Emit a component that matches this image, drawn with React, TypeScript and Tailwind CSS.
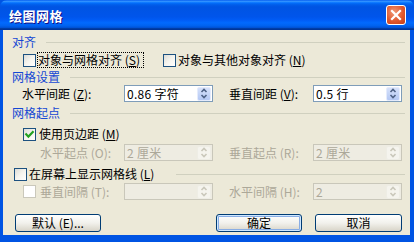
import React from "react";

function Box({ checked, disabled }: { checked?: boolean; disabled?: boolean }) {
  return (
    <div
      className={`w-[13px] h-[13px] shrink-0 border flex items-center justify-center ${
        disabled
          ? "border-[#CAC8BB] bg-white"
          : "border-[#1C5180] bg-gradient-to-br from-[#DCDCD7] via-[#F5F4EE] to-white"
      }`}
    >
      {checked && (
        <svg width="11" height="11" viewBox="0 0 11 11">
          <path d="M2.2 5.2 L4.4 7.6 L8.8 3" stroke="#21A121" strokeWidth="2.1" fill="none" strokeLinecap="square" />
        </svg>
      )}
    </div>
  );
}

function Spin({ disabled }: { disabled?: boolean }) {
  const c = disabled ? "#CAC8BB" : "#4D6185";
  return (
    <div
      className={`w-[14px] h-[14px] mr-[1px] rounded-[2px] border flex items-center justify-center ${
        disabled
          ? "border-[#EEEDE5] bg-[#F5F4EE]"
          : "border-[#E4EBFC] bg-gradient-to-b from-[#D6E1FA] to-[#B4C8F4]"
      }`}
    >
      <svg width="8" height="11" viewBox="0 0 8 11">
        <path d="M1.5 4 L4 1.5 L6.5 4" stroke={c} strokeWidth="1.6" fill="none" />
        <path d="M1.5 7 L4 9.5 L6.5 7" stroke={c} strokeWidth="1.6" fill="none" />
      </svg>
    </div>
  );
}

function Field({ value, disabled, w = "w-[89px]" }: { value: string; disabled?: boolean; w?: string }) {
  return (
    <div
      className={`${w} h-[17px] shrink-0 border flex items-center justify-between ${
        disabled ? "border-[#C9C7BA] bg-[#EEECE2] text-[#ACA899]" : "border-[#7F9DB9] bg-white text-black"
      }`}
    >
      <span className="pl-[2px] text-[12px] leading-none tracking-[0.3px]">{value}</span>
      <Spin disabled={disabled} />
    </div>
  );
}

function Header({ text }: { text: string }) {
  return (
    <div className="h-[16px] flex items-center pl-[9px] pr-[5px]">
      <span className="text-[12px] leading-none text-[#1548D4]">{text}</span>
      <div className="flex-1 ml-[10px] h-px bg-[#D0D0BF]" />
    </div>
  );
}

function Btn({ text, def, w }: { text: string; def?: boolean; w: string }) {
  return (
    <div
      className={`${w} h-[18px] rounded-[3px] border border-[#003C74] flex items-center justify-center text-[12px] leading-none text-black bg-gradient-to-b from-white via-[#F2F1EC] to-[#D8D4C8] ${
        def ? "shadow-[inset_0_0_0_1px_#CEE7FF,inset_0_0_0_2px_#89ADE4]" : ""
      }`}
    >
      {text}
    </div>
  );
}

export default function App() {
  return (
    <div className="w-[414px] h-[242px] flex flex-col bg-[#0054E3] font-['Noto_Sans_CJK_SC',sans-serif] select-none">
      {/* Title bar */}
      <div className="h-[30px] shrink-0 flex items-center justify-between rounded-t-[7px] bg-[linear-gradient(to_bottom,#0058EE_0%,#3593FF_4%,#288EFF_6%,#127DFF_8%,#036FFC_10%,#0262EE_14%,#0057E5_20%,#0054E3_24%,#0055EB_56%,#005BF5_66%,#026AFE_76%,#0062EF_86%,#0052D6_92%,#0040AB_94%,#003092_100%)]">
        <span className="pl-[9px] text-white font-bold text-[13px] leading-none tracking-[0.5px] [text-shadow:1px_1px_#0F1089]">
          绘图网格
        </span>
        <div className="mr-[8px] w-[20px] h-[20px] rounded-[3px] border border-white bg-[radial-gradient(circle_at_40%_35%,#F09A78_0%,#E0582E_55%,#C73D14_100%)] flex items-center justify-center">
          <svg width="12" height="12" viewBox="0 0 12 12">
            <path d="M2 2 L10 10 M10 2 L2 10" stroke="white" strokeWidth="2.2" strokeLinecap="square" />
          </svg>
        </div>
      </div>

      {/* Body */}
      <div className="flex-1 ml-[3px] mr-[4px] mb-[7px] bg-[#ECE9D8] flex flex-col pt-[4px] text-[12px] text-black">
        <Header text="对齐" />

        <div className="mt-[1px] h-[18px] flex items-center pl-[20px]">
          <Box />
          <div className="ml-[1px] h-[16px] w-[107px] border border-dotted border-black flex items-center pl-[0px]">
            <span className="leading-none">对象与网格对齐 (<span className="underline">S</span>)</span>
          </div>
          <div className="ml-[19px]">
            <Box />
          </div>
          <span className="ml-[2px] leading-none">对象与其他对象对齐 (<span className="underline">N</span>)</span>
        </div>

        <Header text="网格设置" />

        <div className="h-[17px] flex items-center pl-[19px]">
          <span className="w-[102px] leading-none">水平间距 (<span className="underline">Z</span>):</span>
          <Field value="0.86 字符" />
          <span className="ml-[16px] w-[84px] leading-none">垂直间距 (<span className="underline">V</span>):</span>
          <Field value="0.5 行" />
        </div>

        <div className="mt-[2px] h-[18px] flex items-center pl-[9px] pr-[5px]">
          <span className="text-[12px] leading-none text-[#1548D4]">网格起点</span>
          <div className="flex-1 ml-[10px] h-px bg-[#D0D0BF]" />
        </div>

        <div className="mt-[3px] h-[18px] flex items-center pl-[20px]">
          <Box checked />
          <span className="ml-[3px] leading-none">使用页边距 (<span className="underline">M</span>)</span>
        </div>

        <div className="mt-[1px] h-[17px] flex items-center pl-[37px] text-[#ACA899]">
          <span className="w-[84px] leading-none">水平起点 (O):</span>
          <Field value="2 厘米" disabled />
          <span className="ml-[16px] w-[84px] leading-none">垂直起点 (R):</span>
          <Field value="2 厘米" disabled />
        </div>

        <div className="mt-[4px] h-[18px] flex items-center pl-[11px] pr-[5px]">
          <Box />
          <span className="ml-[2px] leading-none">在屏幕上显示网格线 (<span className="underline">L</span>)</span>
          <div className="flex-1 ml-[22px] h-px bg-[#D0D0BF]" />
        </div>

        <div className="h-[17px] flex items-center pl-[20px] text-[#ACA899]">
          <Box disabled />
          <span className="ml-[4px] w-[84px] leading-none">垂直间隔 (T):</span>
          <Field value="" disabled />
          <span className="ml-[16px] w-[84px] leading-none">水平间隔 (H):</span>
          <Field value="2" disabled />
        </div>

        <div className="mt-[14px] flex items-center pl-[12px]">
          <Btn text="默认 (E)..." w="w-[86px]" />
          <div className="ml-[115px]">
            <Btn text="确定" def w="w-[86px]" />
          </div>
          <div className="ml-[13px]">
            <Btn text="取消" w="w-[87px]" />
          </div>
        </div>
      </div>
    </div>
  );
}
